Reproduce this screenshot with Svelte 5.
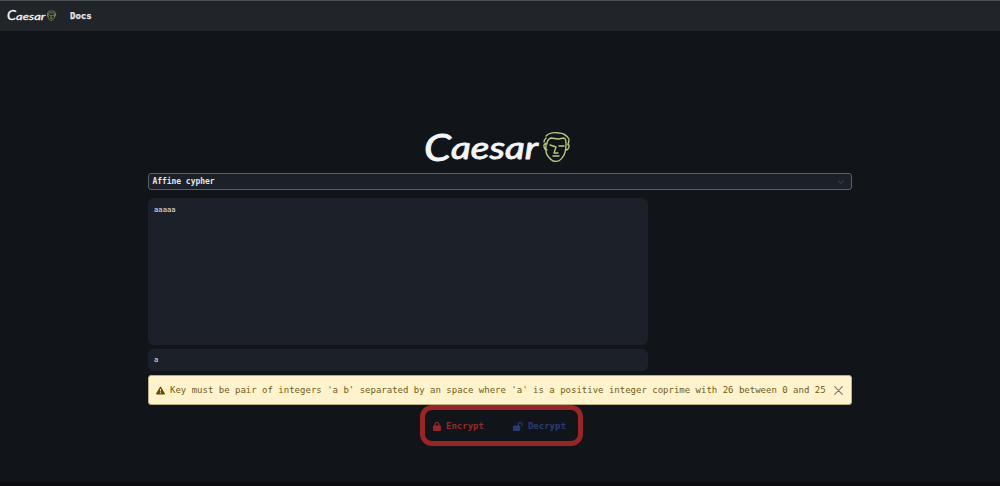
<script>
  let message = $state("Key must be pair of integers 'a b' separated by an space where 'a' is a positive integer coprime with 26 between 0 and 25");
</script>

{#snippet logo()}
  <svg class="logo" viewBox="0 0 146 34" aria-label="Caesar">
    <g fill="#f4f5f7" stroke="#f4f5f7" stroke-width=".9" stroke-linejoin="round" font-family="Lato, sans-serif" font-style="italic" font-weight="400">
      <text x="0" y="29.5" font-size="37" textLength="27" lengthAdjust="spacingAndGlyphs">C</text>
      <text x="27" y="27.5" font-size="31" textLength="87" lengthAdjust="spacingAndGlyphs">aesar</text>
    </g>
    <g fill="none" stroke="#bac780" stroke-width="1.35" stroke-linecap="round" stroke-linejoin="round" transform="translate(1 0)">
      <path d="M121 5c3-3 8-4 13-3 5 0 8 3 10 6" />
      <path d="M119 11c0-2 1-3 2-4M122 13c0-3 1-5 4-6l7 1 6-1c2 1 2 3 2 5M144 9l-1 5" />
      <path d="M121 12v9c1 4 4 7 7 9 4 1 7 0 9-3 3-3 4-7 4-14M120 13c-2 0-1 6 2 6M143 13c2 1 1 6-2 6" />
      <path d="M125 14l6 2M134 15h5M131 16l-2 6h4M128 25h6" />
    </g>
  </svg>
{/snippet}

<div class="page">
  <nav>
    <div class="small-logo">{@render logo()}</div>
    <span>Docs</span>
  </nav>
  <main>
    <div class="brand">{@render logo()}</div>
    <div class="select">
      <span>Affine cypher</span>
      <svg width="8" height="6" viewBox="0 0 8 6"><path d="M1 1.5l3 3 3-3" fill="none" stroke="#343a40" stroke-width="1.2" /></svg>
    </div>
    <div class="field message">aaaaa</div>
    <div class="field key">a</div>
    <div class="alert">
      <svg width="9" height="9" viewBox="0 0 16 16"><path fill="#664d03" d="M8.98 1.57a1.13 1.13 0 0 0-1.96 0L.17 13.23c-.46.78.09 1.77.98 1.77h13.7c.89 0 1.44-.99.98-1.77zM8 5c.54 0 .95.46.9 1l-.35 3.5a.55.55 0 0 1-1.1 0L7.1 6A.9.9 0 0 1 8 5m0 6a1 1 0 1 1 0 2 1 1 0 0 1 0-2" /></svg>
      <span>{message}</span>
      <svg class="close" width="9" height="9" viewBox="0 0 9 9"><path d="M.7.7l7.6 7.6M8.3.7L.7 8.3" fill="none" stroke="#817b68" stroke-width="1.15" stroke-linecap="round" /></svg>
    </div>
    <div class="actions">
      <div class="encrypt">
        <svg width="8" height="9" viewBox="0 0 8 9"><path d="M2 4V2.5a2 2 0 0 1 4 0V4" fill="none" stroke="currentColor" stroke-width="1.2" /><rect y="3.6" width="8" height="5.4" rx="1" fill="currentColor" /></svg>
        <span>Encrypt</span>
      </div>
      <div class="decrypt">
        <svg width="10" height="9" viewBox="0 0 10 9"><path d="M5.4 4V2.5a1.9 1.9 0 0 1 3.8 0V4" fill="none" stroke="currentColor" stroke-width="1.1" /><rect y="3.6" width="7.2" height="5.4" rx="1" fill="currentColor" /></svg>
        <span>Decrypt</span>
      </div>
    </div>
  </main>
</div>

<style>
  :global(body) { margin: 0; background: #111519; }
  .page {
    box-sizing: border-box;
    height: 486px;
    overflow: hidden;
    background: #111519;
    border-bottom: 4px solid #0b0c10;
    color: #e4e6e9;
    font-family: "DejaVu Sans Mono", "Liberation Mono", monospace;
    font-size: 9px;
  }
  nav {
    box-sizing: border-box;
    height: 31px;
    display: flex;
    align-items: center;
    gap: 14px;
    padding-left: 7px;
    background: #212529;
    border-top: 1px solid #4b5054;
    font-weight: 700;
  }
  nav span { -webkit-text-stroke: .25px currentColor; }
  .logo { display: block; width: 100%; height: 100%; overflow: visible; }
  .small-logo { width: 49px; height: 12px; }
  main { width: 704px; margin-left: 148px; display: flex; flex-direction: column; }
  .brand { width: 146px; height: 34px; margin: 100px 0 8px 276px; }
  .select {
    box-sizing: border-box;
    height: 17px;
    display: flex;
    align-items: center;
    justify-content: space-between;
    padding: 0 6px 0 3.5px;
    background: #1c2029;
    border: 1px solid #5c6067;
    border-radius: 3px;
    font-size: 8px;
  }
  .select span { font-weight: 700; letter-spacing: -.05px; }
  .field { box-sizing: border-box; width: 500px; background: #1c2029; border-radius: 6px; padding-left: 6px; font-size: 7.2px; }
  .message { height: 147px; margin-top: 8px; padding-top: 7px; }
  .key { height: 22px; margin-top: 4px; line-height: 22px; }
  .alert {
    box-sizing: border-box;
    height: 30px;
    margin-top: 4px;
    display: flex;
    align-items: center;
    padding: 0 8px 0 7px;
    background: #fff3cd;
    border: 1px solid #b8ad83;
    border-radius: 3px;
    color: #715a18;
    white-space: nowrap;
  }
  .alert span { margin-left: 5px; }
  .close { margin-left: auto; }
  .actions {
    box-sizing: border-box;
    width: 163px;
    height: 41px;
    margin: 0 0 0 272px;
    display: flex;
    align-items: center;
    gap: 29px;
    padding: 1px 0 0 8px;
    border: 5px solid #982626;
    border-radius: 12px;
    font-weight: 700;
  }
  .actions div { display: flex; align-items: center; gap: 5px; }
  .encrypt { color: #922a2c; }
  .decrypt { color: #2b3b78; }
</style>
